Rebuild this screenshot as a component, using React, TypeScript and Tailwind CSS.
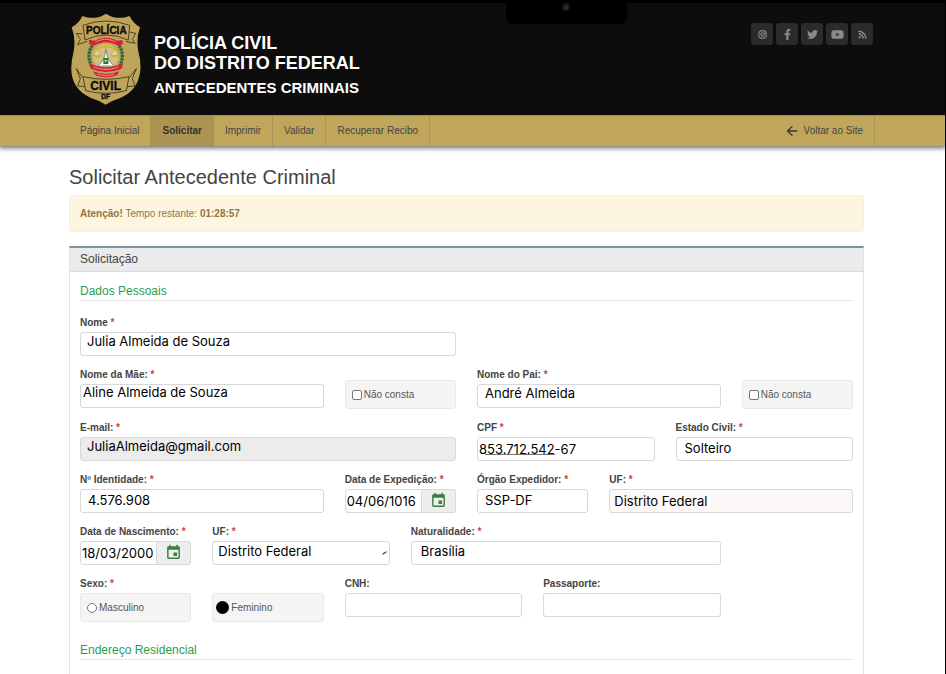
import type { ComponentProps, ReactNode } from "react";
import { FaFacebookF, FaInstagram, FaRss, FaTwitter, FaYoutube } from "react-icons/fa";
import { MdArrowBack, MdEvent } from "react-icons/md";

const boxClass =
  "block h-6 w-full min-w-0 rounded-[3px] border border-[#d8d8d8] font-[Inter,sans-serif] text-[13px] leading-4 text-black outline-none";

function Badge() {
  return (
    <svg viewBox="18 15 210 276" className="h-[92px] w-[70px] shrink-0" role="img" aria-label="Polícia Civil DF">
      <path
        d="M123 17 Q148 34 182 28 L194 24 Q202 44 225 58 Q213 92 220 130 Q232 178 222 208 Q210 254 160 272 Q138 278 122 290 Q106 278 84 272 Q34 254 22 208 Q14 178 26 130 Q33 92 20 58 Q44 44 52 24 L64 28 Q98 34 123 17Z"
        fill="#bfa45b"
      />
      <g fill="#bfa45b" stroke="#15120a" strokeWidth="2">
        <path d="M52 78 L34 76 L46 94 L38 110 L66 100 M194 72 L212 76 L202 94 L210 106 L182 100" />
        <path d="M54 52 Q123 26 194 52 L190 96 Q123 66 60 96Z" />
        <path d="M52 208 L34 182 L46 212 L38 234 L62 236 M194 208 L214 182 L202 212 L210 234 L184 236" />
        <path d="M54 206 Q123 222 192 206 L184 248 Q123 264 62 248Z" />
      </g>
      <g fontFamily="Liberation Sans, Arial, sans-serif" fontWeight="bold" textAnchor="middle" fill="#0b0b0b" stroke="#0b0b0b" strokeWidth="1">
        <text x="124" y="78" fontSize="30">POLÍCIA</text>
        <text x="122" y="246" fontSize="36">CIVIL</text>
        <text x="122" y="274" fontSize="20">DF</text>
      </g>
      <circle cx="122" cy="146" r="38" fill="#cfc08c" />
      <path d="M82 112 Q62 142 82 178 M162 112 Q182 142 162 178" fill="none" stroke="#2f6b3e" strokeWidth="10" strokeDasharray="8 2" />
      <path d="M80 104 Q122 74 166 104 L160 114 Q122 92 86 114Z" fill="#d91f33" />
      <path d="M92 102 Q122 86 152 102" fill="none" stroke="#f6c9c9" strokeWidth="3" strokeDasharray="4 2" />
      <path d="M72 96 L90 98 L84 112 L72 108Z M172 96 L156 98 L162 112 L174 108Z" fill="#d91f33" />
      <path d="M90 124 L122 114 L156 124 M123 108 V158" fill="none" stroke="#d6b21c" strokeWidth="4" />
      <path d="M97 124 L86 142 H108Z M149 124 L138 142 H160Z" fill="#ddd8bb" stroke="#c9a416" strokeWidth="2" />
      <path d="M84 142 Q97 156 110 142 Z M136 142 Q149 156 162 142Z" fill="#d6b21c" />
      <path d="M122 126 Q120 158 98 174 H148 Q126 158 124 126Z" fill="#fff" stroke="#56615c" strokeWidth="2" />
      <path d="M115 150 H130 V168 H115Z" fill="#1d7a43" />
      <path d="M118 158 L122 154 L127 158 L122 163Z" fill="#f3da2c" />
      <path d="M72 166 Q122 190 174 166 L170 182 Q122 202 78 182Z" fill="#d91f33" />
      <path d="M84 190 Q122 206 162 190 L156 202 Q122 214 92 202Z" fill="#d91f33" />
      <path d="M86 177 Q122 191 160 177 M98 198 Q122 207 148 198" fill="none" stroke="#f6c9c9" strokeWidth="3" strokeDasharray="4 2" />
    </svg>
  );
}

const socials = [
  { name: "Instagram", icon: <FaInstagram className="size-[9px]" strokeWidth={24} stroke="currentColor" /> },
  { name: "Facebook", icon: <FaFacebookF className="size-[11px]" /> },
  { name: "Twitter", icon: <FaTwitter className="size-[11px]" /> },
  { name: "YouTube", icon: <FaYoutube className="size-[13px]" /> },
  { name: "RSS", icon: <FaRss className="size-[9px]" /> },
];

function Container({ className = "", children }: { className?: string; children: ReactNode }) {
  return (
    <div className="pr-3">
      <div className={`mx-auto max-w-[795px] ${className}`}>{children}</div>
    </div>
  );
}

function Label({ id, required = true, children }: { id: string; required?: boolean; children: ReactNode }) {
  return (
    <label htmlFor={id} className="block h-[18px] text-[10px] leading-[18px] font-bold whitespace-nowrap text-[#444]">
      {children}
      {required && <span className="text-[#b94a48]"> *</span>}
    </label>
  );
}

type FieldProps = ComponentProps<"input"> & { id: string; label: string; span: string; required?: boolean };

function Field({ id, label, span, required = true, className = "bg-white pl-1.5", ...rest }: FieldProps) {
  return (
    <div className={span}>
      <Label id={id} required={required}>{label}</Label>
      <input id={id} type="text" className={`${boxClass} ${className}`} {...rest} />
    </div>
  );
}

function SelectField({
  id, label, span, value, className, mark,
}: { id: string; label: string; span: string; value: string; className: string; mark?: ReactNode }) {
  return (
    <div className={span}>
      <Label id={id}>{label}</Label>
      <div className="relative">
        <select id={id} className={`${boxClass} appearance-none ${className}`}>
          <option>{value}</option>
        </select>
        {mark}
      </div>
    </div>
  );
}

function DateField({ id, label, value }: { id: string; label: string; value: string }) {
  return (
    <div className="col-span-2">
      <Label id={id}>{label}</Label>
      <div className="flex">
        <input id={id} type="text" defaultValue={value} className={`${boxClass} flex-1 rounded-r-none bg-white pl-px`} />
        <button
          type="button"
          aria-label={`Abrir calendário: ${label}`}
          className="flex h-6 w-[34px] shrink-0 items-center justify-center rounded-r-[3px] border border-l-0 border-[#d8d8d8] bg-[#eee] pb-0.5 text-[#3c7d40]"
        >
          <MdEvent className="size-[17px]" />
        </button>
      </div>
    </div>
  );
}

const optionClass =
  "flex h-[29px] items-center rounded-[3px] border border-[#e8e8e8] bg-[#f5f5f5] text-[10px] text-[#555]";

function NotListed({ id }: { id: string }) {
  return (
    <label htmlFor={id} className={`${optionClass} col-span-2 mt-3.5 gap-0.5 pl-1.5`}>
      <input id={id} type="checkbox" className="size-[10px] appearance-none rounded-[2px] border border-[#767676] bg-white" />
      Não consta
    </label>
  );
}

function SectionTitle({ children }: { children: ReactNode }) {
  return (
    <h3 className="border-b border-[#e5e5e5] pb-px text-xs leading-4 text-[#1fa04f]">{children}</h3>
  );
}

export default function App() {
  return (
    <div className="flex min-h-screen flex-col border-r border-black bg-white font-['Liberation_Sans',Arial,sans-serif] text-[#444]">
      <header className="relative h-[115px] border-t-3 border-black bg-[#0d0d0d]">
        <div className="absolute -top-[3px] left-[53.5%] flex h-6 w-[121px] justify-center rounded-b-md bg-black pt-[3px]">
          <span className="flex size-2 items-center justify-center gap-px rounded-full bg-[#15171a]">
            <span className="h-[3px] w-px bg-[#21506b]" />
            <span className="h-[3px] w-px bg-[#26368a]" />
          </span>
        </div>
        <Container className="flex justify-between">
          <div className="flex gap-[13px] pt-[10px] pl-0.5">
            <Badge />
            <div className="pt-5 font-bold whitespace-nowrap text-white">
              <p className="text-[18px] leading-5">
                POLÍCIA CIVIL
                <br />
                DO DISTRITO FEDERAL
              </p>
              <p className="pt-[5px] text-[15px] leading-5">ANTECEDENTES CRIMINAIS</p>
            </div>
          </div>
          <ul className="-mr-[9px] flex gap-[3px] pt-5">
            {socials.map((s) => (
              <li key={s.name}>
                <a
                  href="#"
                  aria-label={s.name}
                  className="flex size-[22px] items-center justify-center rounded-[3px] bg-[#2b2b2b] text-[#8a8a8a]"
                >
                  {s.icon}
                </a>
              </li>
            ))}
          </ul>
        </Container>
      </header>

      <nav className="border-t border-[#a58d4d] bg-[#bfa65b] text-[10px] leading-[30px] shadow-[0_1px_5px_1px_rgba(0,0,0,0.6)]">
        <Container className="flex justify-between">
          <div className="flex">
            <a href="#" className="border-r border-[#a99350] px-[11px]">Página Inicial</a>
            <a href="#" aria-current="page" className="border-r border-[#a99350] bg-[#ab9452] px-[11px] font-bold text-[#333]">Solicitar</a>
            <a href="#" className="border-r border-[#a99350] px-[11px]">Imprimir</a>
            <a href="#" className="border-r border-[#a99350] px-[11px]">Validar</a>
            <a href="#" className="border-r border-[#a99350] px-[11px]">Recuperar Recibo</a>
          </div>
          <a href="#" className="-mr-[11px] flex items-center gap-1 border-r border-[#a99350] pr-[11px]">
            <MdArrowBack className="size-4 text-[#333]" />
            Voltar ao Site
          </a>
        </Container>
      </nav>

      <main className="flex grow flex-col pr-3">
        <div className="mx-auto flex w-full max-w-[795px] grow flex-col">
          <h1 className="pt-[19px] text-[20px] leading-6">Solicitar Antecedente Criminal</h1>
          <p className="mt-1.5 rounded-[3px] border border-[#fbeed5] bg-[#fcf6e0] px-2.5 py-[9px] text-[10px] leading-[17px] text-[#94743f]">
            <strong>Atenção!</strong> Tempo restante: <strong>01:28:57</strong>
          </p>

          <section className="mt-3.5 grow border-x border-t-2 border-x-[#e3e3e3] border-t-[#7b929f]">
            <h2 className="border-b border-[#d9d9d9] bg-[#ebebeb] px-2.5 text-xs leading-[23px]">Solicitação</h2>
            <form className="px-2.5 pt-[11px]" onSubmit={(e) => e.preventDefault()}>
              <SectionTitle>Dados Pessoais</SectionTitle>
              <div className="grid grid-cols-12 gap-x-[21px] gap-y-2.5 pt-[13px]">
                <Field id="nome" label="Nome" span="col-span-6" className="bg-white pb-1.5 pl-1.5" defaultValue="Julia Almeida de Souza" />
                <div className="col-span-6" />

                <Field id="mae" label="Nome da Mãe:" span="col-span-4" className="bg-white pb-2 pl-0.5" defaultValue="Aline Almeida de Souza" />
                <NotListed id="mae-nc" />
                <Field id="pai" label="Nome do Pai:" span="col-span-4" className="bg-white pb-1.5 pl-[7px]" defaultValue="André Almeida" />
                <NotListed id="pai-nc" />

                <Field id="email" label="E-mail:" span="col-span-6" className="bg-[#ececec] pb-1.5 pl-1.5" readOnly defaultValue="JuliaAlmeida@gmail.com" />
                <div className="relative col-span-3">
                  <Label id="cpf">CPF</Label>
                  <input id="cpf" type="text" className={`${boxClass} bg-white pl-px`} defaultValue="853.712.542-67" />
                  <span className="absolute bottom-1.5 left-2 h-px w-[70px] bg-[#777]" />
                </div>
                <SelectField id="civil" label="Estado Civil:" span="col-span-3" className="bg-white pb-0.5 pl-2" value="Solteiro" />

                <Field id="rg" label="Nº Identidade:" span="col-span-4" className="bg-white pb-0.5 pl-[7px]" defaultValue="4.576.908" />
                <DateField id="expedicao" label="Data de Expedição:" value="04/06/1016" />
                <Field id="orgao" label="Órgão Expedidor:" span="col-span-2" className="bg-white pb-0.5 pl-[7px]" defaultValue="SSP-DF" />
                <SelectField id="uf-rg" label="UF:" span="col-span-4" className="bg-[#fff8f8] pl-1" value="Distrito Federal" />

                <DateField id="nascimento" label="Data de Nascimento:" value="18/03/2000" />
                <SelectField
                  id="uf-nasc"
                  label="UF:"
                  span="col-span-3"
                  className="bg-white pb-1 pl-[5px]"
                  value="Distrito Federal"
                  mark={
                    <svg viewBox="0 0 5 4" className="pointer-events-none absolute top-2.5 right-[3px] h-1 w-[5px]" aria-hidden="true">
                      <path d="M0 4 L1 2 L5 0 L4 2Z" fill="#444" />
                    </svg>
                  }
                />
                <Field id="naturalidade" label="Naturalidade:" span="col-span-5" className="bg-white pb-1 pl-[9px]" defaultValue="Brasília" />
                <div className="col-span-2" />

                <fieldset className="col-span-4">
                  <legend className="block h-[18px] text-[10px] leading-[18px] font-bold">
                    Sexo:<span className="text-[#b94a48]"> *</span>
                  </legend>
                  <div className="grid grid-cols-2 gap-x-[21px]">
                    <label htmlFor="masculino" className={`${optionClass} gap-0.5 pl-1.5`}>
                      <input id="masculino" type="radio" name="sexo" className="size-[10px] appearance-none rounded-full border border-[#767676] bg-white" />
                      Masculino
                    </label>
                    <label htmlFor="feminino" className={`${optionClass} gap-0.5 pl-[3px]`}>
                      <input id="feminino" type="radio" name="sexo" defaultChecked className="size-[13px] appearance-none rounded-full bg-black" />
                      Feminino
                    </label>
                  </div>
                </fieldset>
                <Field id="cnh" label="CNH:" span="col-span-3" required={false} />
                <Field id="passaporte" label="Passaporte:" span="col-span-3" required={false} />
              </div>
              <div className="pt-5">
                <SectionTitle>Endereço Residencial</SectionTitle>
              </div>
            </form>
          </section>
        </div>
      </main>
    </div>
  );
}
